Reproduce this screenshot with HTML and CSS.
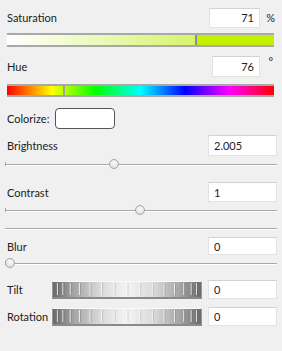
FILE: index.html
```html
<!DOCTYPE html>
<html lang="en">
<head>
    <meta charset="UTF-8">
    <title>Adjustments</title>
    <link rel="stylesheet" href="styles.css">
</head>
<body>
    <div class="panel">
        <div class="row row-sat">
            <span class="label">Saturation</span>
            <span class="field field-sat">71</span>
            <span class="unit">%</span>
        </div>
        <div class="color-bar sat-bar">
            <div class="sat-left" style="width: 70.5%"></div>
            <div class="marker"></div>
            <div class="sat-right"></div>
        </div>

        <div class="row row-hue">
            <span class="label">Hue</span>
            <span class="field field-hue">76</span>
            <span class="unit deg">°</span>
        </div>
        <div class="color-bar hue-bar">
            <div class="marker" style="left: 21%"></div>
        </div>

        <div class="row row-colorize">
            <span class="label">Colorize:</span>
            <span class="swatch"></span>
        </div>

        <div class="row row-field row-first">
            <span class="label">Brightness</span>
            <span class="field field-left">2.005</span>
        </div>
        <div class="slider">
            <div class="thumb" style="left: 40%"></div>
        </div>

        <div class="row row-field">
            <span class="label">Contrast</span>
            <span class="field field-left">1</span>
        </div>
        <div class="slider">
            <div class="thumb" style="left: 49.5%"></div>
        </div>

        <div class="separator"></div>

        <div class="row row-field row-blur">
            <span class="label">Blur</span>
            <span class="field field-left">0</span>
        </div>
        <div class="slider">
            <div class="thumb" style="left: 2%"></div>
        </div>

        <div class="row row-wheel row-tilt">
            <span class="label wheel-label">Tilt</span>
            <span class="wheel">
                <svg viewBox="0 0 150 14" width="148" height="14" preserveAspectRatio="none">
                    <g class="ridge-light">
                        <line x1="4.5" y1="1" x2="4.5" y2="13"/><line x1="10" y1="1" x2="10" y2="13"/>
                        <line x1="17.5" y1="1" x2="17.5" y2="13"/><line x1="26.8" y1="1" x2="26.8" y2="13"/>
                        <line x1="37.5" y1="1" x2="37.5" y2="13"/><line x1="49.3" y1="1" x2="49.3" y2="13"/>
                        <line x1="62" y1="1" x2="62" y2="13"/><line x1="75" y1="1" x2="75" y2="13"/>
                        <line x1="88" y1="1" x2="88" y2="13"/><line x1="100.7" y1="1" x2="100.7" y2="13"/>
                        <line x1="112.5" y1="1" x2="112.5" y2="13"/><line x1="123.2" y1="1" x2="123.2" y2="13"/>
                        <line x1="132.5" y1="1" x2="132.5" y2="13"/><line x1="140" y1="1" x2="140" y2="13"/>
                        <line x1="145.5" y1="1" x2="145.5" y2="13"/>
                    </g>
                    <g class="ridge-dark">
                        <line x1="5.5" y1="1" x2="5.5" y2="13"/><line x1="11" y1="1" x2="11" y2="13"/>
                        <line x1="18.5" y1="1" x2="18.5" y2="13"/><line x1="27.8" y1="1" x2="27.8" y2="13"/>
                        <line x1="38.5" y1="1" x2="38.5" y2="13"/><line x1="50.3" y1="1" x2="50.3" y2="13"/>
                        <line x1="63" y1="1" x2="63" y2="13"/><line x1="76" y1="1" x2="76" y2="13"/>
                        <line x1="89" y1="1" x2="89" y2="13"/><line x1="101.7" y1="1" x2="101.7" y2="13"/>
                        <line x1="113.5" y1="1" x2="113.5" y2="13"/><line x1="124.2" y1="1" x2="124.2" y2="13"/>
                        <line x1="133.5" y1="1" x2="133.5" y2="13"/><line x1="141" y1="1" x2="141" y2="13"/>
                        <line x1="146.5" y1="1" x2="146.5" y2="13"/>
                    </g>
                </svg>
            </span>
            <span class="field field-left">0</span>
        </div>
        <div class="row row-wheel">
            <span class="label wheel-label">Rotation</span>
            <span class="wheel">
                <svg viewBox="0 0 150 14" width="148" height="14" preserveAspectRatio="none">
                    <g class="ridge-light">
                        <line x1="4.5" y1="1" x2="4.5" y2="13"/><line x1="10" y1="1" x2="10" y2="13"/>
                        <line x1="17.5" y1="1" x2="17.5" y2="13"/><line x1="26.8" y1="1" x2="26.8" y2="13"/>
                        <line x1="37.5" y1="1" x2="37.5" y2="13"/><line x1="49.3" y1="1" x2="49.3" y2="13"/>
                        <line x1="62" y1="1" x2="62" y2="13"/><line x1="75" y1="1" x2="75" y2="13"/>
                        <line x1="88" y1="1" x2="88" y2="13"/><line x1="100.7" y1="1" x2="100.7" y2="13"/>
                        <line x1="112.5" y1="1" x2="112.5" y2="13"/><line x1="123.2" y1="1" x2="123.2" y2="13"/>
                        <line x1="132.5" y1="1" x2="132.5" y2="13"/><line x1="140" y1="1" x2="140" y2="13"/>
                        <line x1="145.5" y1="1" x2="145.5" y2="13"/>
                    </g>
                    <g class="ridge-dark">
                        <line x1="5.5" y1="1" x2="5.5" y2="13"/><line x1="11" y1="1" x2="11" y2="13"/>
                        <line x1="18.5" y1="1" x2="18.5" y2="13"/><line x1="27.8" y1="1" x2="27.8" y2="13"/>
                        <line x1="38.5" y1="1" x2="38.5" y2="13"/><line x1="50.3" y1="1" x2="50.3" y2="13"/>
                        <line x1="63" y1="1" x2="63" y2="13"/><line x1="76" y1="1" x2="76" y2="13"/>
                        <line x1="89" y1="1" x2="89" y2="13"/><line x1="101.7" y1="1" x2="101.7" y2="13"/>
                        <line x1="113.5" y1="1" x2="113.5" y2="13"/><line x1="124.2" y1="1" x2="124.2" y2="13"/>
                        <line x1="133.5" y1="1" x2="133.5" y2="13"/><line x1="141" y1="1" x2="141" y2="13"/>
                        <line x1="146.5" y1="1" x2="146.5" y2="13"/>
                    </g>
                </svg>
            </span>
            <span class="field field-left">0</span>
        </div>
    </div>
</body>
</html>
```

FILE: styles.css
```css
body {
    margin: 0;
    background: #f0f0f0;
    font-family: Lato, "Noto Sans", sans-serif;
    font-size: 11px;
    color: #222;
}

.panel {
    display: flex;
    flex-direction: column;
    width: 282px;
    height: 351px;
    padding: 8px 5px 0 7px;
    box-sizing: border-box;
}

.row {
    display: flex;
    align-items: center;
}

.label {
    flex: 1;
}

.field {
    background: #fff;
    border: 1px solid #e3e3e3;
    border-top-color: #d2d2d2;
    box-sizing: border-box;
    display: flex;
    align-items: center;
    padding: 0 5px;
}

/* Saturation / Hue */
.row-sat {
    height: 19px;
}

.field-sat {
    width: 51px;
    height: 20px;
    justify-content: flex-end;
}

.unit {
    width: 17px;
    text-align: right;
    padding-right: 2px;
    box-sizing: border-box;
}

.color-bar {
    position: relative;
    display: flex;
    height: 14px;
    margin-right: 3px;
    border-top: 2px solid #a8a8a8;
    border-bottom: 2px solid #a8a8a8;
    box-sizing: border-box;
}

.sat-bar {
    margin-top: 6px;
}

.sat-left {
    background: linear-gradient(90deg, #ffffff, #d6f46c);
}

.marker {
    width: 2px;
    background: #8e8e8e;
}

.sat-right {
    flex: 1;
    background: #c2f000;
}

.row-hue {
    height: 21px;
    margin-top: 9px;
}

.field-hue {
    width: 48px;
    height: 21px;
    justify-content: flex-end;
}

.deg {
    align-self: flex-start;
    line-height: 12px;
    padding-right: 4px;
}

.hue-bar {
    height: 13px;
    margin-top: 7px;
    background: linear-gradient(90deg, #ff0000, #ffff00 16.7%, #00ff00 33.3%, #00ffff 50%, #0000ff 66.7%, #ff00ff 83.3%, #ff0000);
}

.hue-bar .marker {
    position: absolute;
    top: -1px;
    bottom: -1px;
    width: 2px;
    background: #a0a0a0;
}

/* Colorize */
.row-colorize {
    height: 21px;
    margin-top: 11px;
}

.row-colorize .label {
    flex: none;
    width: 48px;
}

.swatch {
    width: 60px;
    height: 21px;
    background: #fff;
    border: 1px solid #555;
    border-radius: 4px;
    box-sizing: border-box;
}

/* Numeric rows with sliders */
.row-field {
    height: 20px;
    margin-top: 16px;
}

.row-first {
    margin-top: 6px;
    height: 21px;
}

.field-left {
    width: 69px;
    height: 100%;
}

.slider {
    position: relative;
    height: 2px;
    margin: 8px 0 0 -2px;
    border-top: 1px solid #a8a8a8;
    border-bottom: 1px solid #fff;
    box-sizing: border-box;
}

.slider::before {
    content: "";
    position: absolute;
    left: 0;
    top: -3px;
    width: 1px;
    height: 4px;
    background: #a8a8a8;
}

.thumb {
    position: absolute;
    top: -6px;
    width: 10px;
    height: 10px;
    margin-left: -5px;
    border-radius: 50%;
    border: 1px solid #a6a6a6;
    background: radial-gradient(circle at 50% 35%, #fafafa, #d8d8d8);
    box-sizing: border-box;
}

.separator {
    height: 2px;
    margin: 16px 0 0 -2px;
    border-top: 1px solid #a8a8a8;
    border-bottom: 1px solid #fff;
    box-sizing: border-box;
}

.row-blur {
    margin-top: 7px;
    height: 18px;
}

/* Wheels */
.row-wheel {
    height: 19px;
    margin-top: 8px;
}

.row-tilt {
    margin-top: 15px;
}

.wheel-label {
    flex: none;
    width: 45px;
}

.wheel {
    display: flex;
    align-items: center;
    width: 150px;
    height: 18px;
    margin-right: 6px;
    box-sizing: border-box;
    border: 1px solid #9a9a9a;
    border-top-color: #fafafa;
    border-bottom: 2px solid #8a8a8a;
    background: linear-gradient(90deg, #6a6a6a, #a4a4a4 14%, #dadada 32%, #f4f4f4 50%, #dadada 68%, #a4a4a4 86%, #6a6a6a);
}

.wheel svg {
    display: block;
}

.ridge-light line {
    stroke: rgba(255, 255, 255, 0.8);
    stroke-width: 1;
}

.ridge-dark line {
    stroke: rgba(0, 0, 0, 0.15);
    stroke-width: 1;
}
```
